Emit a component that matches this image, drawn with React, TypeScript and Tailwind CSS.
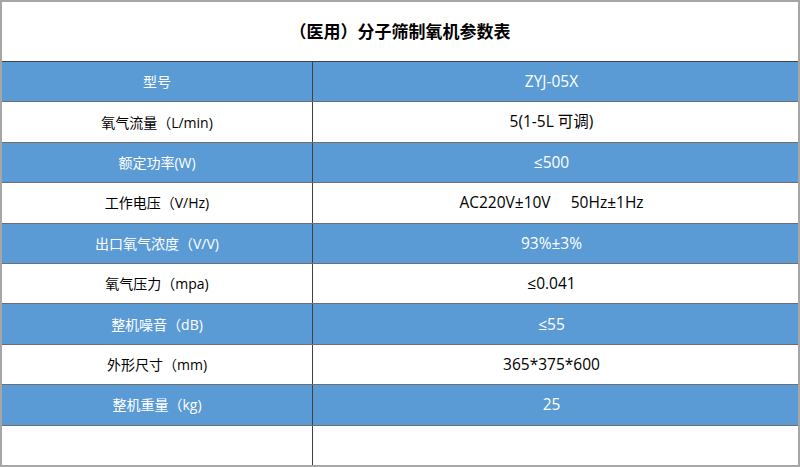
const rows: [string, string][] = [
  ['型号', 'ZYJ-05X'],
  ['氧气流量（L/min)', '5(1-5L 可调)'],
  ['额定功率(W)', '≤500'],
  ['工作电压（V/Hz)', 'AC220V±10V\u00a0\u00a0\u00a0\u00a0\u00a050Hz±1Hz'],
  ['出口氧气浓度（V/V)', '93%±3%'],
  ['氧气压力（mpa)', '≤0.041'],
  ['整机噪音（dB)', '≤55'],
  ['外形尺寸（mm)', '365*375*600'],
  ['整机重量（kg)', '25'],
  ['', ''],
]

const App = () => {
  return (
    <div
      className="flex h-[467px] w-[800px] flex-col border-2 border-[#a6a6a6] bg-white text-black"
      style={{ fontFamily: '"Open Sans", "Noto Sans CJK SC", sans-serif' }}
    >
      {/* Title */}
      <div className="flex h-[60px] shrink-0 items-center justify-center border-b border-[#404040] text-[17px] font-bold">
        （医用）分子筛制氧机参数表
      </div>

      {rows.map(([label, value], i) => {
        const blue = i % 2 === 0 && label !== ''
        return (
          <div
            key={i}
            className={`flex flex-1 border-b border-[#6f6f6f] last:border-b-0 ${
              blue ? 'bg-[#5b9bd5] text-white' : 'bg-white text-black'
            }`}
          >
            <div className="flex w-[311px] items-center justify-center border-r border-[#404040] text-[14px]">
              {label}
            </div>
            <div className="flex flex-1 items-center justify-center pr-[8px] text-[15.5px]">{value}</div>
          </div>
        )
      })}
    </div>
  )
}

export default App
